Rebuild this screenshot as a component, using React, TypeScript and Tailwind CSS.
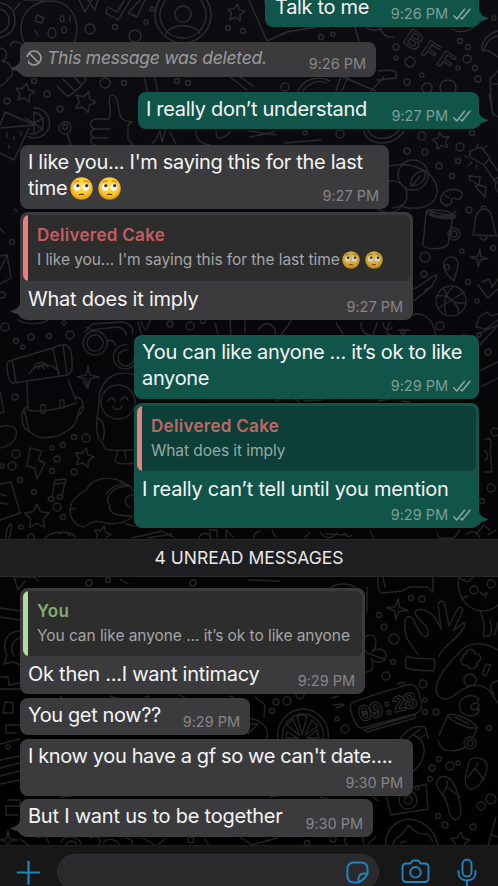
import React from "react";

const FONT = "font-[Inter,'Liberation_Sans',sans-serif]";

function starPath(cx: number, cy: number, r: number, rot = 0, n = 5, inner = 0.5) {
  let d = "";
  for (let i = 0; i < n * 2; i++) {
    const a = ((rot - 90 + (i * 180) / n) * Math.PI) / 180;
    const q = i % 2 ? r * inner : r;
    d += `${i ? "L" : "M"}${(cx + q * Math.cos(a)).toFixed(1)} ${(cy + q * Math.sin(a)).toFixed(1)}`;
  }
  return d + "Z";
}

const STARS: number[][] = [
  [236, 13, 9, 8], [25, 93, 10, 10], [85, 102, 11, 20], [441, 141, 9, -10],
  [84, 458, 10, 12], [37, 517, 13, 0], [102, 535, 9, 15], [460, 842, 10, 5],
];
const SPARKLES: number[][] = [
  [479, 258, 9, 5], [88, 377, 11, 0], [397, 609, 11, 8], [8, 840, 9, 0],
];
const DOTS: number[][] = [
  [90, 29, 5], [115, 27, 2.5], [135, 36, 6], [146, 22, 2], [152, 9, 2], [228, 28, 2.5], [243, 31, 2.5],
  [105, 83, 5], [124, 83, 2.5], [7, 101, 3], [47, 94, 3], [34, 81, 2.5], [60, 109, 3], [65, 128, 6], [65, 127, 2.5],
  [177, 81, 2.5], [188, 83, 2.5], [285, 87, 4],
  [396, 47, 3], [396, 58, 2], [410, 62, 5], [460, 41, 2.5], [468, 47, 2.5], [467, 59, 4], [475, 68, 2.5],
  [458, 68, 2], [478, 79, 3], [422, 75, 2], [407, 82, 3], [427, 88, 5], [448, 88, 8], [321, 37, 2.5], [333, 34, 2],
  [422, 136, 4], [460, 147, 4], [407, 151, 3], [425, 152, 3], [458, 161, 2.5], [439, 166, 3], [452, 176, 2.5],
  [469, 210, 3], [340, 134, 4], [305, 133, 2], [472, 133, 2.5], [494, 18, 2],
  [462, 251, 2], [425, 257, 5], [493, 248, 2.5], [424, 274, 3], [468, 282, 2.5], [477, 301, 2], [440, 326, 4],
  [403, 332, 2], [488, 352, 3], [12, 242, 2.5], [2, 295, 3], [5, 327, 4], [31, 337, 3], [16, 341, 2.5],
  [23, 347, 2], [49, 336, 2.5], [70, 335, 4], [64, 323, 2], [190, 326, 4], [170, 324, 3], [203, 321, 2.5],
  [15, 397, 3], [86, 438, 4], [74, 437, 2.5], [63, 445, 2.5], [52, 448, 2], [57, 459, 3], [52, 471, 2.5],
  [74, 472, 3], [16, 454, 4], [12, 466, 4], [2, 466, 2], [20, 480, 2.5], [34, 492, 2.5], [57, 507, 4],
  [63, 517, 2.5], [21, 527, 2], [495, 432, 4], [491, 488, 4], [482, 501, 2.5], [31, 537, 3],
  [411, 598, 2.5], [422, 599, 3], [379, 615, 2.5], [384, 627, 3], [394, 639, 5], [393, 662, 2.5], [386, 676, 4],
  [423, 684, 4], [276, 702, 3], [287, 701, 4], [300, 695, 4], [272, 711, 2.5], [345, 729, 4], [337, 719, 2],
  [425, 700, 2], [425, 712, 2.5], [436, 712, 3], [489, 728, 2.5], [89, 583, 3], [108, 580, 2.5], [193, 583, 3],
  [439, 759, 2.5], [432, 768, 3], [450, 766, 4], [458, 763, 2], [430, 779, 2.5], [481, 806, 4], [491, 799, 5],
  [438, 816, 2.5], [445, 825, 3], [473, 827, 3], [191, 840, 3], [333, 839, 3], [307, 843, 2.5], [8, 747, 2],
  [470, 743, 6], [470, 743, 3], [454, 234, 6], [454, 234, 3], [447, 267, 2.5], [479, 335, 2],
];

const PATHS: string[] = [
  // cookie, half donut and profile badge
  "M49 1C66 0 77 13 77 29S65 58 49 58 21 45 21 29 32 2 49 1Z",
  "M37 15l7 3-2 5-7-2zM52 28a4 5 0 1 0 .1 0M35 30l3 6M64 27a2.5 3 0 1 0 .1 0M70 16v5M62 16a2 3 0 1 0 .1 0",
  "M-5 3C8 2 15 10 15 20S8 38-5 38M-5 9C4 9 9 13 9 21S3 33-5 33M20 3l-6 7M24 0h20",
  "M183-13a28 28 0 1 0 .1 0M183-8a23 23 0 1 0 .1 0M183 6a8 8 0 1 0 .1 0M166 34C169 23 197 23 200 34",
  "M107 9l-1 4 12 7 13-21M124 1l-7 11-9-5M128 13l13-14M128 13l9 4 8-17M79 0l6 12 7-12M88 0l7 10 3-10",
  "M249 0l18 41M265 0l2 20M267 41l20-9 30-5M380 28c3 8 8 10 14 9",
  // bottle, cloud and straw
  "M0 48c9 2 8 10 2 13 10 2 15 12 6 18-2 4-6 6-8 7M10 46c3-8 10-4 14 1",
  "M57 86l10 10c4 0 17-12 19-17l-8-8M63 79l12 12M70 73l11 11M144 77l5 20M155 77l3 17M230 77l17 13M240 77l13 9",
  // thumbs up
  "M109 119c4-8-2-17 1-23 3-2 6 0 7 4l3 15c2 5 5 6 12 7M109 119h-13c-7 1-7 9-1 10-6 2-5 8 1 9M94 129h16M93 138h15M132 122l-4 3v14l5 6M92 138c-3 4 0 6 3 7",
  // lemon cocktail
  "M34 108a15 15 0 1 1-7 28M34 112a11 11 0 1 1-4 22M34 123V112M34 123l10-5M34 123l9 7M34 123v10M34 123l-9-5",
  "M5 112l30 13-35 3M0 125l5-13M29 128l-15 32-14-7M7 133v4M14 137v3M9 145v3M21 132v3M67 134l4 11",
  "M160 131c-4 7-3 10-8 12M160 131l2 11 4-14M170 132l6 12M196 131c0 8 5 13 14 14M216 132c0 10 9 6 14 0",
  // arcs behind the understand bubble
  "M298 91c5-12 20-16 32-10M303 91c5-8 16-12 23-8M336 91l5-15M348 77l-6 14M343 77l33 14M378 71c18-2 20 0 18 7l-19 2M371 91l13-14",
  "M249 131l27 4M250 137l24-5M364 131c2 14 28 18 40 0M368 130c4 10 22 12 31 0M285 143l36-3",
  // pudding and animal on the right margin
  "M498 31c-11 3-17 11-16 20 8-3 12 5 16 6M484 50c3-10 9-14 14-14M452 29c6 4 16 4 24-4M480 12c2 6 0 8-2 11",
  "M498 71l-8 8 2 34 6 4M492 84h6M489 94l4 20M355 28l4 13M366 28c6 4 16 2 18-2",
  // round creature with leaf
  "M413 160a15 15 0 1 0 .1 0M389 166c20-5 49 4 48 27-2 12-14 16-27 15M389 181c8-2 18 5 18 14 0 8-6 12-14 13M425 171c-8 0-15 5-14 15 10-1 15-5 14-15ZM412 186l8-10",
  // guitar
  "M470 151l11-4 9 11-6 7-14-8zM484 165l12 18M490 160l8 11M468 158l-3-2M472 162l-3 3M477 165l-1 3M477 147l1-3M484 148l3-2M498 181c-4 3-3 8 0 11M494 180l4-3",
  "M469 176l11 1-1 8 7 2-1 10-10-11 4-1-9-5z",
  "M460 191c-10-5-21 2-19 11 3 4 9 4 11 0-2-3 1-5 4-3 8 1 7-7 4-8ZM444 195l5 3",
  "M427 211l27 5M431 211c-1 8 20 6 25 0",
  // mug
  "M426 211c6-3 27 0 30 5-1 5-28 2-30-5ZM426 213l-3 32c3 5 21 5 25-1l5-27M430 214c4 2 17 4 23 2",
  // bell
  "M473 235c3-9 0-25 11-26 10-1 8 18 13 27zM481 209c0-4 5-4 5 0M480 237c2 4 6 4 7 0M378 209c10 7 20 3 24-4M402 206l8 3M445 205l2 2",
  "M454 281c-6-6-12-10-10-19 5-8 13-6 14 2 0 7-3 10-4 17Z",
  "M482 282l7-3 3 8 6-8M478 285l10 13 10-9M413 289c9-2 17-14 24-14-2 12-16 20-24 26M425 290l8-4",
  // basketball
  "M451 286a15 15 0 1 0 .1 0M437 296c11-2 20 6 22 17M444 288c2 11 11 18 22 14M454 286c-9 8-11 16-8 29M439 308l25-16",
  "M479 317l8-5 4 4 7-2M479 317l-3 10 10 2 12-9M464 334l-3 8M480 333l18-8M480 345l18-20M481 387l17-9M498 362l-17 8",
  "M413 315c8-4 20 2 23 20M390 322c-3 5-5 12 0 13M410 330h-12M361 323c0 10 7 13 12 12l4-12M383 323c0 6 7 9 9 4M18 320c8 5 26 5 31-1M259 330a8 8 0 0 1 16 4",
  // envelope
  "M0 256l7-1 4 23-11 6M0 270l7-15M0 228l4 5M14 209l4 3M30 320c4-4 9 0 13-2",
  "M245 333l0-12M231 335l-1-15M281 335l10-14M343 334l-7-11M150 320l-3 9M215 323l3 11M138 322l4 14v10M141 322l4 8",
  // sunglasses
  "M95 331a12 12 0 1 0 .1 0M95 335a8 8 0 1 0 .1 0M127 345a12 12 0 1 0 8 19M127 350a8 8 0 1 0 7 7M107 341c4-2 7 0 9 5M85 332l7-8 30-2c8 1 13 7 10 12M86 327l5 3 26-3c7 1 9 5 9 8",
  // yoga mat and backpack
  "M9 361l44-13c16-8 20-2 19 22l-4 5-55 8c-5 1-8-20-4-22ZM53 349l6 27M63 345l4 29M12 360l4 22M34 369a7 6 0 1 1 14-1M38 369a3 3 0 1 1 6 0M29 374c6-12 25-12 30-1",
  "M27 383l1 24c-8 2-8 19 0 24l10 6c14 2 27-2 36-12 5-7 3-16 8-18M68 380l8 20M27 410c16 3 33-1 49-7M41 405h4v8h-4zM60 400h4v8h-4zM76 397c8 1 10 12 3 18M24 409l5 22M83 380l4 8 3-8",
  "M0 427c12-4 18 2 16 8-1 8-9 12-16 13M0 392l4 20-4 1",
  // bundled baby
  "M118 385a17 17 0 1 0 .1 0M140 377c-20-9-38-2-41 21 1 10-4 22-2 34 0 8 7 10 7 15 2 5 18 3 32 3M108 401c2-4 5-4 7 0M121 400c2-4 5-4 7 0M113 407c3 4 8 3 9-1M118 450l-3 10c0 5 14 4 19 3M125 451l1 8M97 418c6 1 9 11 6 22",
  "M30 448l12 3-4 9 7 3-8 16-2-11-8-2z",
  "M52 497l3-17 11-1-4 16M54 484l10-1M51 497a3 2 0 1 0 .1 0M60 495a3 2 0 1 0 .1 0",
  // cupped hands
  "M134 491c-12-16-40-17-47-2-9 5-17 13-17 21 0 9 6 16 14 17 10-6 10-7 22-4 13 3 23-3 27-7M110 505c-7-6 2-20 20-19M110 505c-2 8 5 11 23 11M106 494c4-5 9-10 16-9M134 495c-10 0-12 8-3 13M70 510l5-2M120 482l7 4M126 524l8 2",
  "M0 484l11-2 9 31-20 7M0 494l6 2M0 503l7 1M6 538c0-8 2-13 5-14 2 3-1 9-2 15M45 538c8-8 27-8 31 0M58 534c5-3 10-2 12 2M132 538l30-7 13 7M148 538l24-4M199 538c2-6 10-6 12 0M210 538v-8h7v8M226 538v-8l7 7",
  "M484 440c7-5 8 5 6 8l2 24h-8M484 451c4-1 5 8 1 9M486 439a3 3 0 0 1 5 2M496 530l-8 5M320 532c5 8 12 7 17 1M326 534l22 1M344 533c4 5 5 4 8 2M370 531l4 7M437 533l2 5h15l6-8M466 534c8-5 11-2 14 4M476 534l8-9 6 5M309 533l-4 5M272 530l4 8M260 531c-6 2-7 5-6 7",
  "M276 401c9-5 17-5 23 1M304 401l18-1M378 401l12-2M402 401l8 1",
  // banner and ok hand
  "M378 577c0 8-1 14 4 16l20-2 8-4h17l6 5v-15M383 577l2 10M330 588c8-6 22-5 27 1M248 580l32 1M120 579l8 5M367 587l0 25",
  "M418 655c-5-10-15-14-13-34 2-8 8-4 10 2 3 7 9 18 13 12 2-12-14-15-13-24 8-4 17 1 22 10l4 8-3-25c3-5 7-3 7 2l4 20 9-18c4-2 6 1 3 7l-8 16 10-8c3 0 2 3 0 6-8 12-20 17-24 27M407 656c9 4 17 2 27 3 2 5 1 9-1 12-10-1-18 0-27-3-1-4-1-8 1-12Z",
  // cat
  "M459 578c-3 14 5 31 22 33 9 0 14-3 17-6M459 578l9 4 5-5M474 586a4 4 0 1 0 .1 0M491 580a4 4 0 1 0 .1 0M480 592l3 3 4-2-2 5M468 596l-5 2M480 611c3 8 6 12 3 25l7 0c3-6 1-10 0-16M498 622c-2 5-1 9-4 13",
  // flower
  "M367 653c-6-6-4-18 3-18s8 11 2 17c7-6 15-2 14 5-1 6-10 7-15 2 4 7 1 13-5 13M367 653l17 6",
  // game controller
  "M498 650c-14-9-31-9-41 5-12 12-21 24-21 36 3 10 12 10 20 3 9-7 20-12 30-6 6 4 8 10 12 15M466 654c0-6 9-6 9 0 6-1 8 7 2 8 1 7-8 9-10 3-6 1-9-7-3-8-2-2 0-3 2-3ZM470 674a6 6 0 1 0 .1 0M498 681c-7 0-10 8-4 13M486 664l-4 10 4 2 5-11z",
  // alarm clock
  "M352 703c12-6 45-15 55-18 8-2 11 3 13 12 3 9 2 14-5 17l-53 14c-6 2-15-22-10-25ZM364 730l50-15M397 684l5-2 3 2M365 730l2 2 48-14 0-3M332 698l7-2M333 705l10-1M336 708l8-3",
  // orange slice
  "M303 709a26 26 0 0 1 25 30M303 709a26 26 0 0 0-25 30M303 714a21 21 0 0 1 20 25M303 714a21 21 0 0 0-20 25M302 734l-5-17c3-3 9-2 10 0zM300 736l-13-11 6-6zM305 735l7-15 6 6zM298 738h-12l1-6zM307 738h12l-2-8zM248 718c12 1 22 10 19 20M248 734l10-10-8 0",
  // can, crescent and swirl
  "M448 715c6-3 24 5 29 12-5 4-28-6-29-12ZM448 715l-9 20M477 728l-4 10M455 717l14 7M400 739c8-11 15-14 25-12l3 11M409 738l11-9M418 739l7-4",
  "M479 699c-10-8-22 0-19 10 1 8 19 10 19 0-9 4-12-6-2-6ZM480 704l-4 6",
  // flip flops, instant camera and face
  "M438 740c3 12 13 13 26 8M413 735c17 6 13 27-1 37M470 789c-9-4-3-19-1-27 3-7 17-5 18 4 0 10-9 24-17 23ZM467 778l8-10 9 12M475 768l3-5M455 820c-9-4-4-18-15-29-9-10 2-20 11-11 6 7 7 15 9 24 2 8 1 15-5 16ZM442 795l5-8 13 10M447 787l0-6",
  "M386 795l40-11 2 25-37 6zM408 791a9 9 0 1 0 .1 0M408 796a4 4 0 1 0 .1 0M417 786a2 2 0 1 0 .1 0M382 781h4",
  "M386 846c-3-18 17-33 34-24 11 5 16 14 18 24M393 844c2-8 12-8 15-19 6 6 10 10 20 9l5 8M401 843l5-2M488 846l8-29M492 835l6 2",
  // left margin pieces under the divider
  "M14 577l4 13 7-9M16 577h18l4 4M0 608l20 3M0 617l20 3M20 631c-13 0-19 12-13 25l-3 8 9-2 8 3M20 638c-9 2-10 12-6 18M0 677l8 0 1 8 11-2M0 689h20M5 702l8 1v10H3zM0 703M6 725h14M6 725v8h10M0 760l20-4M0 768l20-5M0 776l20-5M0 784l20-4M8 800h12v6H6v9h12M0 744l20-5M60 696l3 3M110 696l10 3M145 697l4-1M180 695l8 5",
  "M20 839l8 6M37 838l8-3 4 8M61 842c4-8 18-6 20 2M66 845c2-5 9-5 11 0M90 838c10-4 12 2 8 8M103 843c5-6 14-4 16 2M126 838c7 2 9 4 4 8M143 838l13 8 10-8M205 839l4 7M240 837l12 8 25-7M346 837c-3 5-1 8 4 9M376 837l-9 8M362 836l2 8",
  "M255 697l10 8-1 12M233 697l-4-1M373 797l5 4M60 797l12-1M270 797l12-2M320 797l8 2",
];

function Wallpaper() {
  return (
    <svg className="absolute inset-0 h-[886px] w-[498px]" viewBox="0 0 498 886" fill="none" aria-hidden="true">
      <defs>
        <linearGradient id="ink" gradientUnits="userSpaceOnUse" x1="0" y1="0" x2="0" y2="886">
          <stop offset="0" stopColor="#2d2d31" />
          <stop offset="0.5" stopColor="#252528" />
          <stop offset="1" stopColor="#222220" />
        </linearGradient>
      </defs>
      <g stroke="url(#ink)" strokeWidth="1.4" strokeLinejoin="round" strokeLinecap="round">
        {STARS.map(([x, y, r, a], i) => <path key={i} d={starPath(x, y, r, a)} />)}
        {SPARKLES.map(([x, y, r, a], i) => <path key={i} d={starPath(x, y, r, a, 4, 0.25)} />)}
        {DOTS.map(([x, y, r], i) => <circle key={i} cx={x} cy={y} r={r} />)}
        {PATHS.map((d, i) => <path key={i} d={d} />)}
      </g>
      <g className="font-['Liberation_Sans',sans-serif] font-bold" stroke="#2d2d31" strokeWidth="1.2">
        <text x="402" y="42" fontSize="24" letterSpacing="4" transform="rotate(33 402 42)">BFF</text>
      </g>
      <text className="font-['Liberation_Mono',monospace] font-bold" x="360" y="722" fontSize="23" letterSpacing="-2" stroke="#2a2a29" strokeWidth="1.1" transform="rotate(-15 360 722)">09:28</text>
    </svg>
  );
}

function RollingEyes({ className }: { className: string }) {
  return (
    <svg className={`inline-block shrink-0 ${className}`} viewBox="0 0 24 24" role="img" aria-label="🙄">
      <defs>
        <radialGradient id="face" cx="0.5" cy="0.4" r="0.62">
          <stop offset="0" stopColor="#ffe65c" />
          <stop offset="0.65" stopColor="#fcc630" />
          <stop offset="1" stopColor="#dc8712" />
        </radialGradient>
      </defs>
      <circle cx="12" cy="12" r="11.7" fill="url(#face)" />
      <ellipse cx="7.4" cy="10.7" rx="3.3" ry="3.6" fill="#fff" />
      <ellipse cx="16.6" cy="10.7" rx="3.3" ry="3.6" fill="#fff" />
      <circle cx="8.2" cy="9" r="1.8" fill="#4d3526" />
      <circle cx="17.4" cy="9" r="1.8" fill="#4d3526" />
      <path d="M4.4 5.6C5.8 4.2 7.6 3.9 9.3 4.4M14.7 4.4c1.7-.5 3.5-.2 4.9 1.2" stroke="#9a6412" strokeWidth="0.9" fill="none" strokeLinecap="round" />
      <path d="M9.8 18.4c1.300-.6 3.200-.6 4.400 0" stroke="#6b3d10" strokeWidth="1.3" fill="none" strokeLinecap="round" />
    </svg>
  );
}

function Time({ t, sent }: { t: string; sent?: boolean }) {
  return (
    <div className={`col-start-1 row-start-1 flex items-center self-end justify-self-end whitespace-nowrap pb-[4px] text-[14.5px] leading-[18px] ${sent ? "gap-[5px] pr-[8px] text-[#7d9e95]" : "pr-[10px] text-[#858588]"}`}>
      <span className="tracking-[-0.02px]">{t}</span>
      {sent && (
        <svg className="h-[12px] w-[18px]" viewBox="0 0 18 12" fill="none" stroke="#8aa8a0" strokeWidth="1.5" strokeLinecap="round" strokeLinejoin="round">
          <path d="M.8 7.8 3.800 11 11.500 1.200M7.800 9.800 9 11 17 1.200" />
        </svg>
      )}
    </div>
  );
}

function Bubble({ sent, tail, className, children }: { sent?: boolean; tail?: boolean; className: string; children: React.ReactNode }) {
  return (
    <div className={`relative flex shrink-0 flex-col rounded-[8px] ${sent ? "mr-[19px] self-end bg-[#10544a]" : "ml-[20px] self-start bg-[#3b3b3d]"} ${className}`}>
      {tail && (
        <svg className={`absolute bottom-0 h-[20px] w-[20px] ${sent ? "-right-[10px] fill-[#10544a]" : "-left-[10px] -scale-x-100 fill-[#3b3b3d]"}`} viewBox="0 0 20 20">
          <path d="M2 0H10V2C10 7 14 10 20 11 17 13 14.500 14 12.500 14 10 17 8 19.500 2 20Z" />
        </svg>
      )}
      {children}
    </div>
  );
}

function Body({ children, time, sent, className = "pt-[4px]", tracking = "tracking-[-0.32px]" }: { children: React.ReactNode; time: string; sent?: boolean; className?: string; tracking?: string }) {
  return (
    <div className="grid flex-1">
      <div className={`col-start-1 row-start-1 whitespace-nowrap pl-[8px] text-[20px] leading-[26px] text-[#f4f4f5] ${tracking} ${className}`}>{children}</div>
      <Time t={time} sent={sent} />
    </div>
  );
}

function Quote({ name, children, kind, className }: { name: string; children: React.ReactNode; kind: "pink" | "teal" | "green"; className: string }) {
  const box = { pink: "bg-[#2d2d2d]", teal: "bg-[#0d3e37]", green: "bg-[#2d2d2d]" }[kind];
  const bar = { pink: "bg-[#ef7b7e]", teal: "bg-[#e08482]", green: "bg-[#b0dca0]" }[kind];
  const title = { pink: "text-[#c45d5f]", teal: "text-[#bd6a66]", green: "text-[#84ac77]" }[kind];
  const sub = kind === "teal" ? "text-[#93aaa5]" : "text-[#a5a5a7]";
  return (
    <div className={`mx-[3px] mt-[3px] flex shrink-0 overflow-hidden rounded-[6px] ${box} ${className}`}>
      <div className={`w-[5px] ${bar}`} />
      <div className="whitespace-nowrap pl-[9px] pt-[9px]">
        <div className={`text-[17px] font-semibold leading-[22px] tracking-[0.3px] ${title}`}>{name}</div>
        <div className={`mt-[3px] flex items-center text-[15.5px] leading-[22px] tracking-[-0.06px] ${sub}`}>{children}</div>
      </div>
    </div>
  );
}

export default function App() {
  return (
    <div className={`relative flex h-[886px] w-[498px] flex-col overflow-hidden bg-linear-to-b from-[#0d0d11] via-[#060609] to-[#010102] ${FONT}`}>
      <Wallpaper />
      <main className="relative flex h-[845px] shrink-0 flex-col">
        <Bubble sent tail className="-mt-[10px] h-[37px] w-[214px]">
          <Body sent time="9:26 PM"><span className="pl-[2px]">Talk to me</span></Body>
        </Bubble>

        <Bubble tail className="mt-[15px] h-[35px] w-[356px]">
          <div className="grid flex-1">
            <div className="col-start-1 row-start-1 flex items-center self-start pl-[6px] pt-[3px] text-[#9a9a9c]">
              <svg className="h-[16px] w-[16px]" viewBox="0 0 16 16" fill="none" stroke="currentColor" strokeWidth="1.7">
                <circle cx="8" cy="8" r="7" />
                <path d="M3 3l10 10" />
              </svg>
              <span className="pl-[5px] text-[17.5px] italic leading-[26px] tracking-[-0.24px]">This message was deleted.</span>
            </div>
            <Time t="9:26 PM" />
          </div>
        </Bubble>

        <Bubble sent tail className="mt-[15px] h-[37px] w-[341px]">
          <Body sent time="9:27 PM">I really don’t understand</Body>
        </Bubble>

        <Bubble className="mt-[16px] h-[64px] w-[369px]">
          <Body time="9:27 PM">
            <div>I like you... I'm saying this for the last</div>
            <div className="flex items-center"><span>time</span><RollingEyes className="ml-[3px] h-[23px] w-[23px]" /><RollingEyes className="ml-[5px] h-[23px] w-[23px]" /></div>
          </Body>
        </Bubble>

        <Bubble tail className="mt-[3px] h-[108px] w-[393px]">
          <Quote name="Delivered Cake" kind="pink" className="h-[66px]">
            <span>I like you... I'm saying this for the last time</span>
            <RollingEyes className="ml-[2px] h-[18px] w-[18px] opacity-80" />
            <RollingEyes className="ml-[5px] h-[18px] w-[18px] opacity-80" />
          </Quote>
          <Body time="9:27 PM" className="pt-[5px]" tracking="tracking-[-0.24px]">What does it imply</Body>
        </Bubble>

        <Bubble sent className="mt-[15px] h-[64px] w-[345px]">
          <Body sent time="9:29 PM">
            <div>You can like anyone ... it’s ok to like</div>
            <div>anyone</div>
          </Body>
        </Bubble>

        <Bubble sent tail className="mt-[4px] h-[125px] w-[345px]">
          <Quote name="Delivered Cake" kind="teal" className="h-[65px]">What does it imply</Quote>
          <Body sent time="9:29 PM" className="pt-[5px]" tracking="tracking-[-0.23px]">I really can’t tell until you mention</Body>
        </Bubble>

        <div className="mt-[11px] flex h-[38px] shrink-0 items-center justify-center border-y border-[#29292b] bg-[#1e1e20] text-[17.5px] text-[#e9e9ea]">
          <span>4 UNREAD MESSAGES</span>
        </div>

        <Bubble className="mt-[11px] h-[106px] w-[345px]">
          <Quote name="You" kind="green" className="h-[65px]">You can like anyone ... it’s ok to like anyone</Quote>
          <Body time="9:29 PM" className="pt-[5px]" tracking="tracking-[-0.26px]">Ok then ...I want intimacy</Body>
        </Bubble>
        <Bubble className="mt-[4px] h-[37px] w-[230px]"><Body time="9:29 PM" tracking="tracking-[-0.38px]">You get now??</Body></Bubble>
        <Bubble className="mt-[4px] h-[57px] w-[393px]"><Body time="9:30 PM" tracking="tracking-[-0.37px]">I know you have a gf so we can't date....</Body></Bubble>
        <Bubble tail className="mt-[3px] h-[38px] w-[353px]"><Body time="9:30 PM" tracking="tracking-[-0.23px]">But I want us to be together</Body></Bubble>
      </main>

      <footer className="relative flex h-[41px] shrink-0 items-start border-t border-[#202020] bg-[#171718]">
        <svg className="ml-[16px] mt-[14px] h-[25px] w-[25px]" viewBox="0 0 25 25" stroke="#2483bd" strokeWidth="2.200"><path d="M.8 12.500h23.400M12.500 1v23.400" /></svg>
        <div className="ml-[16px] mt-[8px] flex h-[36px] w-[322px] justify-end rounded-[18px] border border-[#333335] bg-[#2a2a2c]">
          <svg className="mr-[9px] mt-[6px] h-[23px] w-[23px]" viewBox="0 0 24 24" fill="none" stroke="#2483bd" strokeWidth="2" strokeLinejoin="round">
            <path d="M13 22.500H8.500C4 22.500 1.500 20 1.500 15.500v-7C1.500 4 4 1.500 8.500 1.500h7C20 1.500 22.500 4 22.500 8.500V13C20.500 17 17 20.500 13 22.500ZM13 22.500v-3.500c0-4 2-6 6-6h3.500" />
          </svg>
        </div>
        <svg className="ml-[22px] mt-[13px] h-[26px] w-[29px]" viewBox="0 0 29 26" fill="none" stroke="#2483bd" strokeWidth="1.900" strokeLinejoin="round">
          <path d="M9.500 4.500 11 2.300c.4-.6.9-.8 1.500-.8h4c.6 0 1.100.2 1.500.8l1.500 2.200h4c2.700 0 4 1.300 4 4v10.500c0 2.700-1.300 4-4 4h-18c-2.700 0-4-1.300-4-4V8.500c0-2.700 1.300-4 4-4Z" />
          <circle cx="14.500" cy="13.300" r="5.300" />
        </svg>
        <svg className="ml-[27px] mt-[12px] h-[30px] w-[20px]" viewBox="0 0 20 30" fill="none" stroke="#2483bd" strokeWidth="1.900" strokeLinecap="round">
          <rect x="5.500" y="1.500" width="9" height="17" rx="4.500" />
          <path d="M1.500 13v1.500c0 5 3.500 8 8.500 8s8.500-3 8.500-8V13M10 22.500V30" />
        </svg>
      </footer>
    </div>
  );
}
